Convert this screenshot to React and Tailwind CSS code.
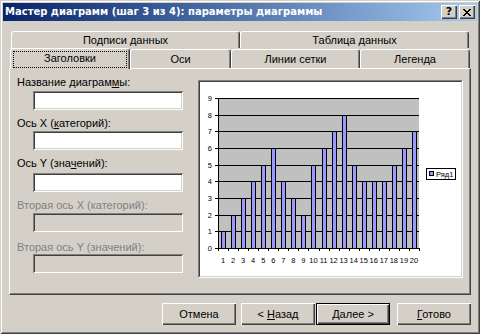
import React from "react";

const raised =
  "shadow-[inset_1px_1px_0_#ffffff,inset_-1px_-1px_0_#404040,inset_-2px_-2px_0_#808080]";
const sunken =
  "shadow-[inset_1px_1px_0_#808080,inset_-1px_-1px_0_#ffffff,inset_2px_2px_0_#404040,inset_-2px_-2px_0_#d4d0c8]";

const values = [1, 2, 3, 4, 5, 6, 4, 3, 2, 5, 6, 7, 8, 5, 4, 4, 4, 5, 6, 7];

function BackTab({ w, children }) {
  return (
    <div
      className={`${w} h-[17px] rounded-t-[3px] border-t border-l border-white border-r border-r-[#404040] shadow-[inset_-1px_0_0_#808080] pt-[2px] text-center leading-[13px]`}
    >
      {children}
    </div>
  );
}

function FrontTab({ w, selected, children }) {
  if (selected) {
    return (
      <div
        className={`${w} relative z-10 -mb-[1px] flex h-[21px] rounded-t-[3px] border-t border-l border-white border-r border-r-[#404040] bg-[#d4d0c8] shadow-[inset_-1px_0_0_#808080] px-[2px] pt-[2px] pb-[1px]`}
      >
        <div className="flex-1 border border-dotted border-black text-center leading-[13px]">
          {children}
        </div>
      </div>
    );
  }
  return (
    <div
      className={`${w} h-[19px] rounded-t-[3px] border-t border-l border-white border-r border-r-[#404040] shadow-[inset_-1px_0_0_#808080] pt-[3px] text-center leading-[13px]`}
    >
      {children}
    </div>
  );
}

function Field({ label, disabled, labelMt, inputMt }) {
  return (
    <>
      <div
        className={`${labelMt} leading-[13px] ${disabled ? "text-[#808080]" : "text-black"}`}
      >
        {label}
      </div>
      <div
        className={`${inputMt} ml-[16px] h-[19px] w-[150px] ${sunken} ${disabled ? "bg-[#d4d0c8]" : "bg-white"}`}
      />
    </>
  );
}

function Button({ children, isDefault, w = "w-[74px]", className = "" }) {
  if (isDefault) {
    return (
      <div className={`${w} h-[22px] border border-black ${className}`}>
        <div className={`flex h-full items-center justify-center ${raised}`}>
          <span className="whitespace-pre">{children}</span>
        </div>
      </div>
    );
  }
  return (
    <div className={`${w} flex h-[22px] items-center justify-center ${raised} ${className}`}>
      <span className="whitespace-pre">{children}</span>
    </div>
  );
}

function Chart() {
  const left = 18;
  const right = 219;
  const top = 16;
  const bottom = 166;
  const step = (right - left) / 20;
  const unit = (bottom - top) / 9;
  const font = "'Liberation Sans', sans-serif";
  return (
    <svg width="261" height="194" className="block bg-white" shapeRendering="crispEdges">
      <rect x={left} y={top} width={right - left} height={bottom - top} fill="#c0c0c0" />
      {Array.from({ length: 10 }, (_, v) => (
        <g key={v}>
          <line
            x1={left - 3}
            x2={right}
            y1={Math.round(bottom - v * unit) + 0.5}
            y2={Math.round(bottom - v * unit) + 0.5}
            stroke="#000"
          />
          <text x={12} y={Math.round(bottom - v * unit) + 3} fontSize="7.5" textAnchor="end" fontFamily={font}>
            {v}
          </text>
        </g>
      ))}
      {values.map((v, i) => {
        const x = Math.round(left + i * step + 3);
        const y = Math.round(bottom - v * unit);
        return (
          <g key={i}>
            <rect x={x + 0.5} y={y + 0.5} width={4} height={bottom - y} fill="#9999ff" stroke="#000" />
            <text x={left + (i + 0.5) * step} y={181} fontSize="7.5" textAnchor="middle" fontFamily={font}>
              {i + 1}
            </text>
          </g>
        );
      })}
      {Array.from({ length: 21 }, (_, i) => (
        <line
          key={i}
          x1={Math.round(left + i * step) + 0.5}
          x2={Math.round(left + i * step) + 0.5}
          y1={bottom}
          y2={bottom + 3}
          stroke="#000"
        />
      ))}
      <line x1={left + 0.5} x2={left + 0.5} y1={top} y2={bottom + 1} stroke="#000" />
      <rect x={226.5} y={86.5} width={29} height={11} fill="#fff" stroke="#000" />
      <rect x={229.5} y={89.5} width={4} height={4} fill="#9999ff" stroke="#000" />
      <text x={236} y={95} fontSize="7.5" fontFamily={font}>
        Ряд1
      </text>
    </svg>
  );
}

export default function App() {
  return (
    <div className="h-[334px] w-[480px] overflow-hidden bg-[#d4d0c8] p-[3px] text-[11px] text-black [font-family:'Liberation_Sans',sans-serif] shadow-[inset_1px_1px_0_#d4d0c8,inset_-1px_-1px_0_#404040,inset_2px_2px_0_#ffffff,inset_-2px_-2px_0_#808080]">
      {/* title bar */}
      <div className="flex h-[18px] items-center bg-gradient-to-r from-[#0a246a] to-[#a6caf0] pl-[2px] pr-[2px]">
        <div className="flex-1 text-[10px] font-bold leading-[18px] text-white [font-family:'DejaVu_Sans',sans-serif]">
          Мастер диаграмм (шаг 3 из 4): параметры диаграммы
        </div>
        <div className="flex gap-[2px]">
          <div className={`flex h-[14px] w-[16px] items-center justify-center bg-[#d4d0c8] pb-[1px] text-[11px] font-bold leading-[12px] [font-family:'DejaVu_Sans',sans-serif] ${raised}`}>
            ?
          </div>
          <div className={`flex h-[14px] w-[16px] items-center justify-center bg-[#d4d0c8] ${raised}`}>
            <svg width="8" height="7" viewBox="0 0 8 7" shapeRendering="crispEdges">
              <path d="M0 0h2v1h-2zM6 0h2v1h-2zM1 1h2v1h-2zM5 1h2v1h-2zM2 2h4v1h-4zM3 3h2v1h-2zM2 4h4v1h-4zM1 5h2v1h-2zM5 5h2v1h-2zM0 6h2v1h-2zM6 6h2v1h-2z" fill="#000" />
            </svg>
          </div>
        </div>
      </div>

      {/* tabs */}
      <div className="ml-[8px] mt-[10px] flex">
        <BackTab w="w-[229px]">Подписи данных</BackTab>
        <BackTab w="w-[229px]">Таблица данных</BackTab>
      </div>
      <div className="ml-[7px] flex h-[20px] items-end">
        <FrontTab w="w-[120px]" selected>
          Заголовки
        </FrontTab>
        <FrontTab w="w-[101px]">Оси</FrontTab>
        <FrontTab w="w-[129px]">Линии сетки</FrontTab>
        <FrontTab w="w-[110px]">Легенда</FrontTab>
      </div>

      {/* panel */}
      <div className="ml-[6px] flex h-[227px] w-[462px] items-start border-t border-l border-white border-r border-b border-r-[#404040] border-b-[#404040] shadow-[inset_-1px_-1px_0_#808080] pl-[7px] pt-[7px]">
        <div className="flex w-[181px] flex-col items-start">
          <Field label={<>Название диаграм<u>м</u>ы:</>} labelMt="mt-0" inputMt="mt-[2px]" />
          <Field label={<>Ось X (<u>к</u>атегорий):</>} labelMt="mt-[7px]" inputMt="mt-[1px]" />
          <Field label={<>Ось Y (зна<u>ч</u>ений):</>} labelMt="mt-[7px]" inputMt="mt-[3px]" />
          <Field label="Вторая ось X (категорий):" disabled labelMt="mt-[7px]" inputMt="mt-[1px]" />
          <Field label="Вторая ось Y (значений):" disabled labelMt="mt-[9px]" inputMt="mt-0" />
        </div>
        <div className="mt-[4px] border border-t-[#808080] border-l-[#808080] border-r-white border-b-white">
          <div className="border border-t-[#404040] border-l-[#404040] border-r-[#d4d0c8] border-b-[#d4d0c8]">
            <Chart />
          </div>
        </div>
      </div>

      {/* buttons */}
      <div className="ml-[159px] mt-[8px] flex">
        <Button>Отмена</Button>
        <Button className="ml-[5px]">
          {"< "}
          <u>Н</u>азад
        </Button>
        <Button isDefault className="ml-[1px]">
          <u>Д</u>алее{" >"}
        </Button>
        <Button className="ml-[7px]">
          <u>Г</u>отово
        </Button>
      </div>
    </div>
  );
}
